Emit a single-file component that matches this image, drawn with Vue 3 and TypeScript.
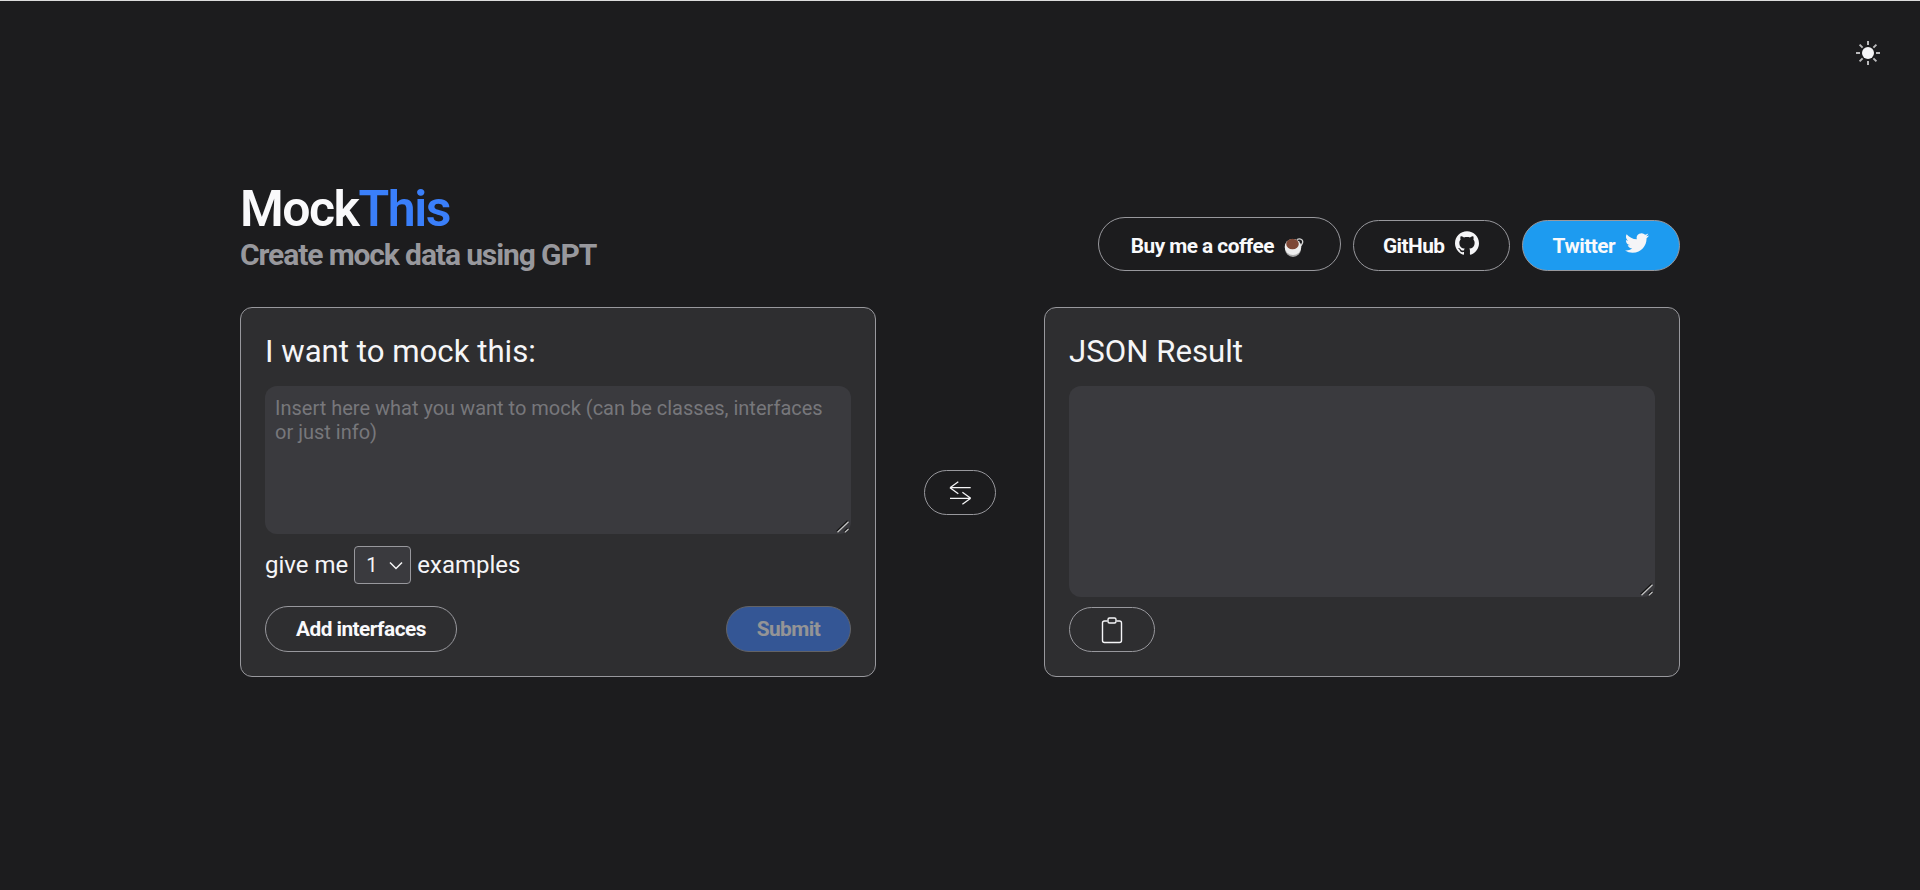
<script setup lang="ts">
import { ref } from 'vue'
const prompt = ref('')
const result = ref('')
const count = ref('1')
const options: string[] = ['1', '2', '3', '4', '5']
</script>

<template>
  <div class="page">
    <button class="theme" aria-label="Toggle theme">
      <svg width="26" height="26" viewBox="0 0 26 26">
        <circle cx="13" cy="13" r="6" fill="#f5f5f7" />
        <g stroke="#b9b9bb" stroke-width="2">
          <path d="M13 1v4M13 21v4M1 13h4M21 13h4M4.6 4.6l3 3M18.4 18.4l3 3M4.6 21.4l3-3M18.4 7.6l3-3" />
        </g>
      </svg>
    </button>
    <main class="main">
      <header class="top">
        <div class="brand">
          <h1 class="title">Mock<span class="accent">This</span></h1>
          <p class="subtitle">Create mock data using GPT</p>
        </div>
        <nav class="links">
          <a class="pill link coffee">
            Buy me a coffee
            <svg class="cup" width="24" height="24" viewBox="0 0 24 24">
              <path d="M15 4.500c3.500-1.500 6.500 .5 5.500 3.500-.6 2-2 3.500-4 4.500" fill="none" stroke="#d4d4d4" stroke-width="1.300" />
              <ellipse cx="11" cy="13.500" rx="8" ry="8.500" fill="#a9a9a9" />
              <ellipse cx="11" cy="12" rx="8.300" ry="8" fill="#ededed" />
              <ellipse cx="10.500" cy="9" rx="6.300" ry="5.300" fill="#7d4735" />
            </svg>
          </a>
          <a class="pill link github">
            GitHub
            <svg class="raised" width="24" height="24" viewBox="0 0 24 24" fill="#f5f5f7">
              <path d="M12 .297c-6.630 0-12 5.373-12 12 0 5.303 3.438 9.800 8.205 11.385.600.113.820-.258.820-.577 0-.285-.010-1.040-.015-2.040-3.338.724-4.042-1.610-4.042-1.610C4.422 18.070 3.633 17.700 3.633 17.700c-1.087-.744.084-.729.084-.729 1.205.084 1.838 1.236 1.838 1.236 1.070 1.835 2.809 1.305 3.495.998.108-.776.417-1.305.760-1.605-2.665-.300-5.466-1.332-5.466-5.930 0-1.310.465-2.380 1.235-3.220-.135-.303-.540-1.523.105-3.176 0 0 1.005-.322 3.300 1.230.960-.267 1.980-.399 3-.405 1.020.006 2.040.138 3 .405 2.280-1.552 3.285-1.230 3.285-1.230.645 1.653.240 2.873.120 3.176.765.840 1.230 1.910 1.230 3.220 0 4.610-2.805 5.625-5.475 5.920.420.360.810 1.096.810 2.220 0 1.606-.015 2.896-.015 3.286 0 .315.210.690.825.570C20.565 22.092 24 17.592 24 12.297c0-6.627-5.373-12-12-12" />
            </svg>
          </a>
          <a class="pill link twitter">
            Twitter
            <svg class="raised" width="24" height="24" viewBox="0 0 24 24" fill="#f5f5f7">
              <path d="M23.953 4.570a10 10 0 01-2.825.775 4.958 4.958 0 002.163-2.723c-.951.555-2.005.959-3.127 1.184a4.920 4.920 0 00-8.384 4.482C7.690 8.095 4.067 6.130 1.640 3.162a4.822 4.822 0 00-.666 2.475c0 1.710.870 3.213 2.188 4.096a4.904 4.904 0 01-2.228-.616v.060a4.923 4.923 0 003.946 4.827 4.996 4.996 0 01-2.212.085 4.936 4.936 0 004.604 3.417 9.867 9.867 0 01-6.102 2.105c-.390 0-.779-.023-1.170-.067a13.995 13.995 0 007.557 2.209c9.053 0 13.998-7.496 13.998-13.985 0-.210 0-.420-.015-.630A9.935 9.935 0 0024 4.590z" />
            </svg>
          </a>
        </nav>
      </header>

      <section class="workspace">
        <div class="card">
          <h2 class="card-title">I want to mock this:</h2>
          <textarea
            v-model="prompt"
            class="field field-input"
            placeholder="Insert here what you want to mock (can be classes, interfaces or just info)"
          ></textarea>
          <label class="count">
            give me
            <select v-model="count" class="select">
              <option v-for="o in options" :key="o" :value="o">{{ o }}</option>
            </select>
            examples
          </label>
          <div class="actions">
            <button class="pill action">Add interfaces</button>
            <button class="pill action submit" disabled>Submit</button>
          </div>
        </div>

        <div class="middle">
          <button class="pill icon-btn swap" aria-label="Swap">
            <svg width="24" height="26" viewBox="0 0 24 26" fill="none" stroke="#f5f5f7" stroke-width="1.300">
              <path d="M2 8.700h20.700M2 8.700l8.300-6M2 8.700l8.300 6" />
              <path d="M22.700 19.300H2M22.700 19.300l-8.300-6M22.700 19.300l-8.300 6" />
            </svg>
          </button>
        </div>

        <div class="card">
          <h2 class="card-title">JSON Result</h2>
          <textarea v-model="result" class="field field-output"></textarea>
          <div class="copy-row">
            <button class="pill icon-btn copy" aria-label="Copy">
              <svg width="26" height="28" viewBox="0 0 26 28" fill="none" stroke="#f5f5f7" stroke-width="1.400">
                <path d="M8.500 5H5.500A2 2 0 003.500 7V24.500a2 2 0 002 2h15a2 2 0 002-2V7a2 2 0 00-2-2H17.500" />
                <rect x="9" y="2" width="8" height="5" rx="1.500" />
              </svg>
            </button>
          </div>
        </div>
      </section>
    </main>
  </div>
</template>

<style>
html, body { margin: 0; background: #1c1c1e; }
</style>

<style scoped>
.page {
  position: relative;
  box-sizing: border-box;
  min-height: 890px;
  padding-top: 181px;
  border-top: 1px solid #dcdcdc;
  background: #1c1c1e;
  color: #f5f5f7;
  color-scheme: dark;
  font-family: Roboto, "Liberation Sans", sans-serif;
}
.theme {
  position: absolute;
  top: 39px;
  right: 39px;
  display: flex;
  padding: 0;
  border: 0;
  background: none;
}
.main { width: 1440px; margin: 0 auto; }
.top { display: flex; justify-content: space-between; align-items: flex-end; margin-bottom: 33px; }
.title {
  margin: 0;
  font-size: 50px;
  line-height: 54px;
  font-weight: 600;
  letter-spacing: -0.03em;
  color: #f9f9fb;
}
.accent { color: #3a7ffa; }
.subtitle {
  margin: 0;
  color: #98989d;
  font-size: 30px;
  line-height: 38px;
  font-weight: 700;
  letter-spacing: -0.037em;
}
.links { display: flex; align-items: flex-end; gap: 12px; margin-bottom: 3px; }
.pill {
  box-sizing: border-box;
  display: inline-flex;
  align-items: center;
  justify-content: center;
  border: 1px solid #98989d;
  border-radius: 9999px;
  background: none;
  color: #f9f9fb;
  font-family: inherit;
  font-weight: 700;
  letter-spacing: -0.025em;
}
.link { height: 51px; gap: 10px; font-size: 20.8px; padding: 0 30px; }
.coffee { height: 54px; gap: 8px; padding: 3px 34px 0 32px; }
.cup { margin-top: 2px; }
.github { padding-left: 29px; }
.raised { margin-bottom: 6px; }
.twitter { background: #1d9bf0; }
.workspace { display: grid; grid-template-columns: 636px 168px 636px; }
.card {
  box-sizing: border-box;
  display: flex;
  flex-direction: column;
  height: 370px;
  padding: 24px;
  border: 1px solid #98989d;
  border-radius: 12px;
  background: #2e2e30;
}
.card-title {
  margin: 0 0 14px;
  font-size: 31.2px;
  line-height: 40px;
  font-weight: 400;
}
.field {
  box-sizing: border-box;
  display: block;
  width: 100%;
  padding: 10px 10px 8px;
  border: 0;
  border-radius: 12px;
  outline: none;
  background: #3a3a3e;
  color: #f5f5f7;
  font-family: inherit;
  font-size: 20px;
  line-height: 24px;
}
.field::-webkit-resizer {
  background: url("data:image/svg+xml,%3Csvg xmlns='http://www.w3.org/2000/svg' width='15' height='15'%3E%3Cpath d='M.7 12.300 11.600 1.800M8 12.600l3.600-3.400' stroke='%23111' stroke-width='1.200' fill='none'/%3E%3Cpath d='M1.500 13.300 12.500 2.800M8.800 13.400l3.700-3.400' stroke='%23c4c4c4' stroke-width='1.200' fill='none'/%3E%3C/svg%3E") no-repeat;
}
.field::placeholder { color: #77777b; }
.field-input { height: 148px; }
.field-output { height: 211px; }
.count {
  display: flex;
  align-items: center;
  gap: 6px;
  margin-top: 12px;
  font-size: 24px;
  line-height: 37px;
}
.select {
  box-sizing: border-box;
  width: 57px;
  height: 38px;
  padding: 0 0 0 11px;
  border: 1px solid #98989d;
  border-radius: 4px;
  background: #3a3a3e url("data:image/svg+xml,%3Csvg xmlns='http://www.w3.org/2000/svg' width='14' height='9' fill='none'%3E%3Cpath d='M1 1.500l6 6 6-6' stroke='%23f5f5f7' stroke-width='1.500'/%3E%3C/svg%3E") no-repeat right 7px center;
  appearance: none;
  color: #f5f5f7;
  font-family: inherit;
  font-size: 20px;
}
.actions { display: flex; justify-content: space-between; margin-top: 22px; }
.action { height: 46px; padding: 0 30px; font-size: 20.8px; }
.submit { width: 125px; padding: 0; background: #3a7ffa; opacity: 0.5; }
.middle { display: flex; align-items: center; justify-content: center; }
.icon-btn { padding: 0; }
.swap { width: 72px; height: 45px; }
.copy-row { margin-top: 10px; }
.copy { width: 86px; height: 45px; }
</style>
